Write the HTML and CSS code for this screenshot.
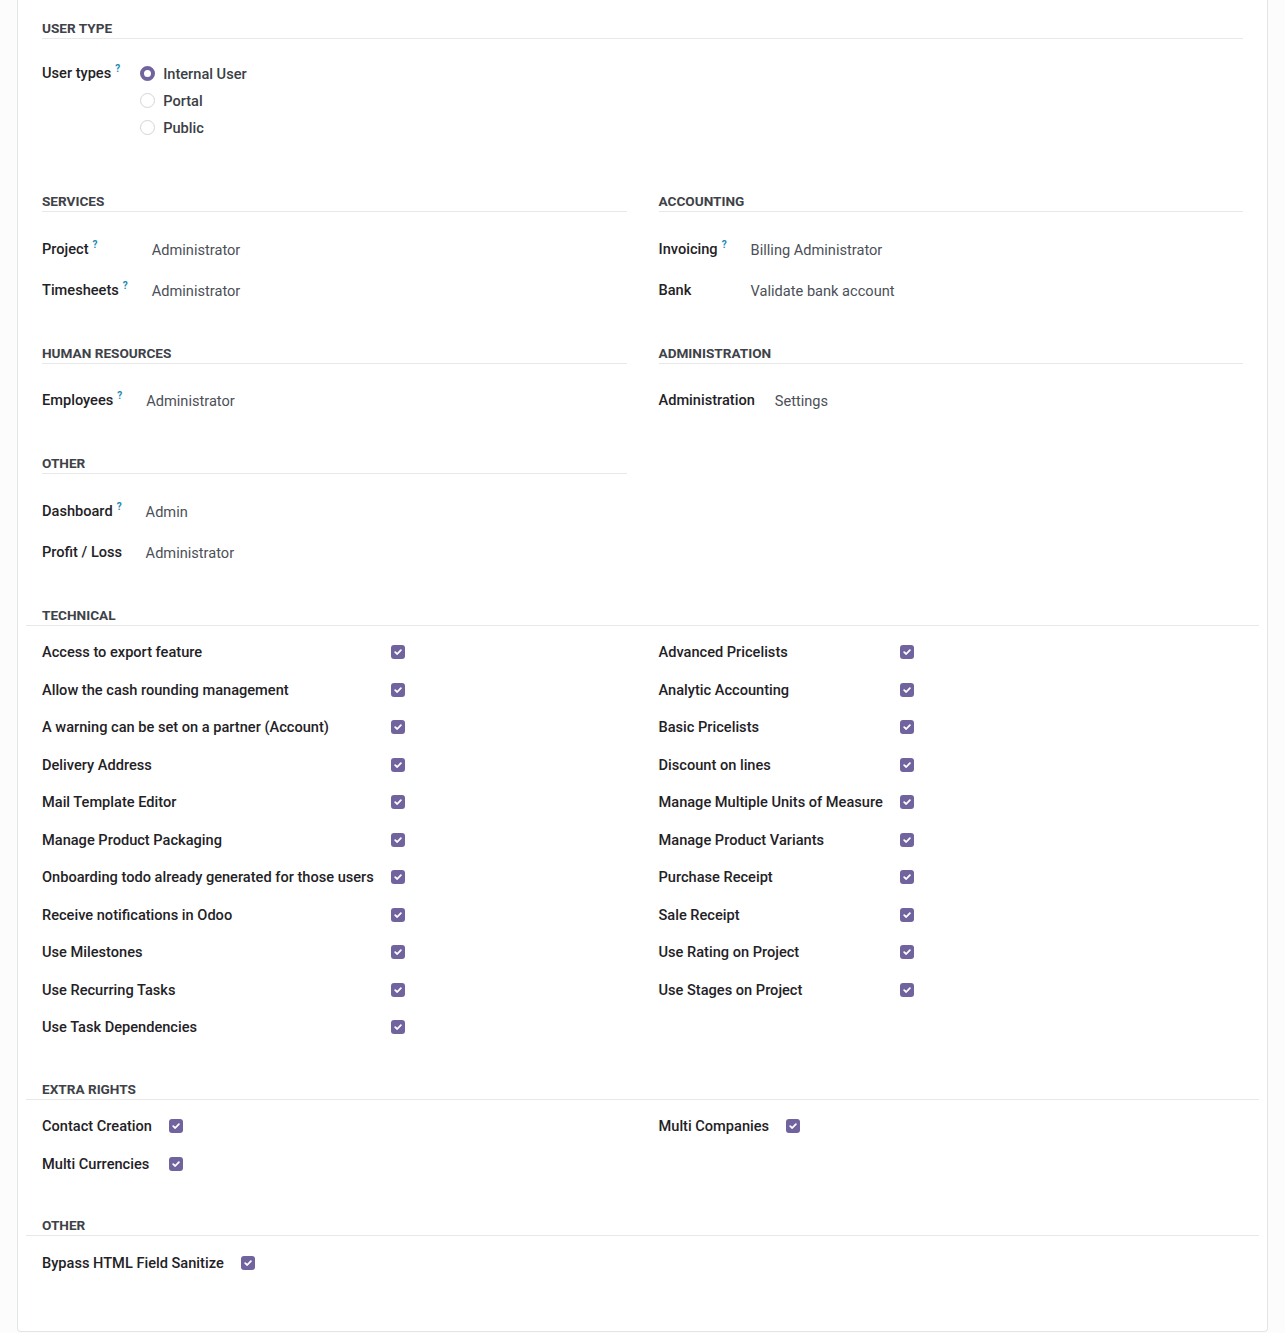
FILE: index.html
```html
<!DOCTYPE html>
<html lang="en">
<head>
<meta charset="utf-8">
<title>User access rights</title>
<link rel="stylesheet" href="styles.css">
</head>
<body>
<div class="card">
  <section class="grp-usertype">
    <div class="sep">User type</div>
    <div class="ut-fields">
      <div class="lbl ut-lbl">User types<sup class="q">?</sup></div>
      <div class="radios">
        <div class="radio"><span class="rb on"></span>Internal User</div>
        <div class="radio"><span class="rb"></span>Portal</div>
        <div class="radio"><span class="rb"></span>Public</div>
      </div>
    </div>
  </section>

  <div class="cols">
    <div class="col">
      <section class="grp">
        <div class="sep">Services</div>
        <div class="fields">
          <div class="lbl">Project<sup class="q">?</sup></div><div class="val">Administrator</div>
          <div class="lbl">Timesheets<sup class="q">?</sup></div><div class="val">Administrator</div>
        </div>
      </section>
      <section class="grp">
        <div class="sep">Human Resources</div>
        <div class="fields">
          <div class="lbl">Employees<sup class="q">?</sup></div><div class="val">Administrator</div>
        </div>
      </section>
      <section class="grp">
        <div class="sep">Other</div>
        <div class="fields">
          <div class="lbl">Dashboard<sup class="q">?</sup></div><div class="val">Admin</div>
          <div class="lbl">Profit / Loss</div><div class="val">Administrator</div>
        </div>
      </section>
    </div>
    <div class="col">
      <section class="grp">
        <div class="sep">Accounting</div>
        <div class="fields">
          <div class="lbl">Invoicing<sup class="q">?</sup></div><div class="val">Billing Administrator</div>
          <div class="lbl">Bank</div><div class="val">Validate bank account</div>
        </div>
      </section>
      <section class="grp">
        <div class="sep">Administration</div>
        <div class="fields">
          <div class="lbl">Administration</div><div class="val">Settings</div>
        </div>
      </section>
    </div>
  </div>

  <section class="tech">
    <div class="tsep">Technical</div>
    <div class="tcols">
      <div class="tcol">
        <div class="checks">
          <div class="lbl">Access to export feature</div><span class="cb"><svg viewBox="0 0 10 10"><path d="M2.2 5.2 L4.2 7 L7.9 3.1"/></svg></span>
          <div class="lbl">Allow the cash rounding management</div><span class="cb"><svg viewBox="0 0 10 10"><path d="M2.2 5.2 L4.2 7 L7.9 3.1"/></svg></span>
          <div class="lbl">A warning can be set on a partner (Account)</div><span class="cb"><svg viewBox="0 0 10 10"><path d="M2.2 5.2 L4.2 7 L7.9 3.1"/></svg></span>
          <div class="lbl">Delivery Address</div><span class="cb"><svg viewBox="0 0 10 10"><path d="M2.2 5.2 L4.2 7 L7.9 3.1"/></svg></span>
          <div class="lbl">Mail Template Editor</div><span class="cb"><svg viewBox="0 0 10 10"><path d="M2.2 5.2 L4.2 7 L7.9 3.1"/></svg></span>
          <div class="lbl">Manage Product Packaging</div><span class="cb"><svg viewBox="0 0 10 10"><path d="M2.2 5.2 L4.2 7 L7.9 3.1"/></svg></span>
          <div class="lbl">Onboarding todo already generated for those users</div><span class="cb"><svg viewBox="0 0 10 10"><path d="M2.2 5.2 L4.2 7 L7.9 3.1"/></svg></span>
          <div class="lbl">Receive notifications in Odoo</div><span class="cb"><svg viewBox="0 0 10 10"><path d="M2.2 5.2 L4.2 7 L7.9 3.1"/></svg></span>
          <div class="lbl">Use Milestones</div><span class="cb"><svg viewBox="0 0 10 10"><path d="M2.2 5.2 L4.2 7 L7.9 3.1"/></svg></span>
          <div class="lbl">Use Recurring Tasks</div><span class="cb"><svg viewBox="0 0 10 10"><path d="M2.2 5.2 L4.2 7 L7.9 3.1"/></svg></span>
          <div class="lbl">Use Task Dependencies</div><span class="cb"><svg viewBox="0 0 10 10"><path d="M2.2 5.2 L4.2 7 L7.9 3.1"/></svg></span>
        </div>
      </div>
      <div class="tcol">
        <div class="checks">
          <div class="lbl">Advanced Pricelists</div><span class="cb"><svg viewBox="0 0 10 10"><path d="M2.2 5.2 L4.2 7 L7.9 3.1"/></svg></span>
          <div class="lbl">Analytic Accounting</div><span class="cb"><svg viewBox="0 0 10 10"><path d="M2.2 5.2 L4.2 7 L7.9 3.1"/></svg></span>
          <div class="lbl">Basic Pricelists</div><span class="cb"><svg viewBox="0 0 10 10"><path d="M2.2 5.2 L4.2 7 L7.9 3.1"/></svg></span>
          <div class="lbl">Discount on lines</div><span class="cb"><svg viewBox="0 0 10 10"><path d="M2.2 5.2 L4.2 7 L7.9 3.1"/></svg></span>
          <div class="lbl">Manage Multiple Units of Measure</div><span class="cb"><svg viewBox="0 0 10 10"><path d="M2.2 5.2 L4.2 7 L7.9 3.1"/></svg></span>
          <div class="lbl">Manage Product Variants</div><span class="cb"><svg viewBox="0 0 10 10"><path d="M2.2 5.2 L4.2 7 L7.9 3.1"/></svg></span>
          <div class="lbl">Purchase Receipt</div><span class="cb"><svg viewBox="0 0 10 10"><path d="M2.2 5.2 L4.2 7 L7.9 3.1"/></svg></span>
          <div class="lbl">Sale Receipt</div><span class="cb"><svg viewBox="0 0 10 10"><path d="M2.2 5.2 L4.2 7 L7.9 3.1"/></svg></span>
          <div class="lbl">Use Rating on Project</div><span class="cb"><svg viewBox="0 0 10 10"><path d="M2.2 5.2 L4.2 7 L7.9 3.1"/></svg></span>
          <div class="lbl">Use Stages on Project</div><span class="cb"><svg viewBox="0 0 10 10"><path d="M2.2 5.2 L4.2 7 L7.9 3.1"/></svg></span>
        </div>
      </div>
    </div>
  </section>

  <section class="tech">
    <div class="tsep">Extra Rights</div>
    <div class="tcols">
      <div class="tcol">
        <div class="checks">
          <div class="lbl">Contact Creation</div><span class="cb"><svg viewBox="0 0 10 10"><path d="M2.2 5.2 L4.2 7 L7.9 3.1"/></svg></span>
          <div class="lbl">Multi Currencies</div><span class="cb"><svg viewBox="0 0 10 10"><path d="M2.2 5.2 L4.2 7 L7.9 3.1"/></svg></span>
        </div>
      </div>
      <div class="tcol">
        <div class="checks">
          <div class="lbl">Multi Companies</div><span class="cb"><svg viewBox="0 0 10 10"><path d="M2.2 5.2 L4.2 7 L7.9 3.1"/></svg></span>
        </div>
      </div>
    </div>
  </section>

  <section class="tech">
    <div class="tsep">Other</div>
    <div class="tcols">
      <div class="tcol">
        <div class="checks">
          <div class="lbl">Bypass HTML Field Sanitize</div><span class="cb"><svg viewBox="0 0 10 10"><path d="M2.2 5.2 L4.2 7 L7.9 3.1"/></svg></span>
        </div>
      </div>
      <div class="tcol"></div>
    </div>
  </section>
</div>
</body>
</html>
```
FILE: styles.css
```css
html, body {
  margin: 0;
  padding: 0;
  background: #fcfcfc;
}

body {
  font-family: Roboto, "Liberation Sans", Arial, sans-serif;
  font-size: 14.6px;
  color: #1f2226;
}

.card {
  margin-left: 17px;
  width: 1251px;
  height: 1332px;
  box-sizing: border-box;
  background: #ffffff;
  border: 1px solid #e4e5e7;
  border-top: 0;
  border-radius: 0 0 4px 4px;
  padding: 18px 8px 0;
}

.sep,
.tsep {
  font-size: 13.6px;
  font-weight: 700;
  line-height: 20px;
  text-transform: uppercase;
  color: #3e4248;
  border-bottom: 1px solid #e7e8ea;
}

.tsep {
  padding-left: 16px;
}

.grp-usertype {
  padding: 0 16px;
}

.ut-fields {
  margin-top: 21px;
  display: grid;
  grid-template-columns: max-content 1fr;
  column-gap: 16px;
}

.ut-lbl {
  line-height: 27px;
}

.radio {
  display: flex;
  align-items: center;
  height: 27px;
  font-weight: 500;
  color: #3b3f45;
}

.rb {
  width: 15px;
  height: 15px;
  box-sizing: border-box;
  border-radius: 50%;
  border: 1px solid #d3d5d9;
  background: #fff;
  margin-right: 8px;
}

.rb.on {
  border: 4.5px solid #71639e;
}

.lbl {
  font-weight: 500;
  color: #1f2226;
  white-space: nowrap;
}

.q {
  font-size: 10px;
  font-weight: 700;
  color: #2188b3;
  margin-left: 4px;
  padding-right: 4px;
  vertical-align: baseline;
  position: relative;
  top: -6px;
  line-height: 0;
}

.val {
  color: #4c5058;
  position: relative;
  top: 1px;
}

.cols {
  display: flex;
  margin-top: 50px;
}

.col {
  flex: 1 1 0;
  min-width: 0;
  padding: 0 16px;
}

.grp + .grp {
  margin-top: 32.5px;
}

.fields {
  margin-top: 16px;
  display: grid;
  grid-template-columns: max-content 1fr;
  grid-auto-rows: 41px;
  column-gap: 20px;
  align-items: center;
}

.tech {
  margin-top: 32.5px;
}

.tcols {
  display: flex;
  margin-top: 8px;
}

.tcol {
  flex: 1 1 0;
  min-width: 0;
  padding: 0 16px;
}

.checks {
  display: grid;
  grid-template-columns: max-content max-content;
  grid-auto-rows: 37.5px;
  column-gap: 17px;
  align-items: center;
}

.cb {
  width: 14px;
  height: 14px;
  border-radius: 3px;
  background: #71639e;
  display: flex;
  align-items: center;
  justify-content: center;
}

.cb svg {
  width: 10px;
  height: 10px;
  fill: none;
  stroke: #ffffff;
  stroke-width: 1.8;
  stroke-linecap: round;
  stroke-linejoin: round;
}
```
